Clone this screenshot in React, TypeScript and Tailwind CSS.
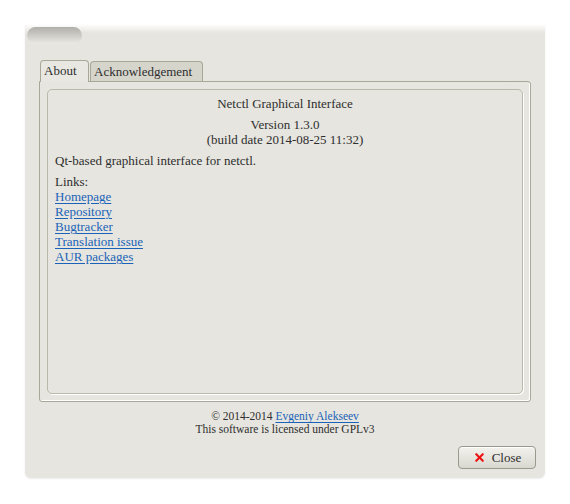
import { X } from "lucide-react"

const links = ["Homepage", "Repository", "Bugtracker", "Translation issue", "AUR packages"]

const App = () => {
  return (
    <div
      className="w-[570px] h-[504px] bg-white pt-[24px] pl-[25px] text-[13px] leading-[15px] text-[#2e2e2e]"
      style={{ fontFamily: '"Liberation Serif", serif' }}
    >
      <div className="w-[520px] h-[454px] rounded-b-[6px] bg-[#e6e5df] bg-gradient-to-b from-white via-[#e6e5df] via-[2%] to-[#e6e5df] shadow-[0_1px_2px_rgba(0,0,0,0.08)] flex flex-col">
        {/* title pill */}
        <div className="ml-[2px] mt-[3px] w-[55px] h-[17px] rounded-full bg-gradient-to-b from-[#b0afa9] to-[#ebeae5]" />

        {/* tab widget */}
        <div className="ml-[14px] mt-[15px] w-[492px] flex flex-col">
          <div className="flex items-end h-[22px] pl-[1px] gap-[1px]">
            <div className="h-[22px] w-[49px] border border-b-0 border-[#a9a898] rounded-t-[4px] bg-[#e8e7e2] pl-[3px] pt-[2px] relative z-10 -mb-px pb-px">
              About
            </div>
            <div className="h-[20px] w-[113px] border border-b-0 border-[#a9a898] rounded-t-[4px] bg-[#d6d5cc] pl-[3px] pt-[2px]">
              Acknowledgement
            </div>
          </div>
          <div className="h-[321px] border border-[#a9a898] rounded-b-[3px] rounded-tr-[3px] p-[7px] shadow-[inset_-1px_-1px_0_#ffffff]">
            <div className="h-full border border-[#b9b8aa] rounded-[5px] shadow-[1px_1px_0_#ffffff] px-[7px] pt-[6px]">
              <div className="text-center">Netctl Graphical Interface</div>
              <div className="text-center mt-[6px]">Version 1.3.0</div>
              <div className="text-center">(build date 2014-08-25 11:32)</div>
              <div className="mt-[6px]">Qt-based graphical interface for netctl.</div>
              <div className="mt-[6px]">Links:</div>
              {links.map((l) => (
                <div key={l}>
                  <a className="text-[#1a63b8] underline underline-offset-[2px]" href="#">
                    {l}
                  </a>
                </div>
              ))}
            </div>
          </div>
        </div>

        {/* footer */}
        <div className="mt-[8px] text-center text-[11.5px] leading-[13px]">
          <div>
            © 2014-2014{" "}
            <a className="text-[#1a63b8] underline underline-offset-[2px]" href="#">
              Evgeniy Alekseev
            </a>
          </div>
          <div>This software is licensed under GPLv3</div>
        </div>

        <div className="flex justify-end mt-auto mb-[9px] mr-[9px]">
          <button className="w-[78px] h-[23px] rounded-[4px] border border-[#9a998d] bg-gradient-to-b from-[#f3f2ee] to-[#d8d7cf] flex items-center justify-center gap-[6px] text-[13px] shadow-[inset_0_1px_0_#ffffff]">
            <X className="w-[13px] h-[13px] text-[#ee1111]" strokeWidth={4} />
            Close
          </button>
        </div>
      </div>
    </div>
  )
}

export default App
